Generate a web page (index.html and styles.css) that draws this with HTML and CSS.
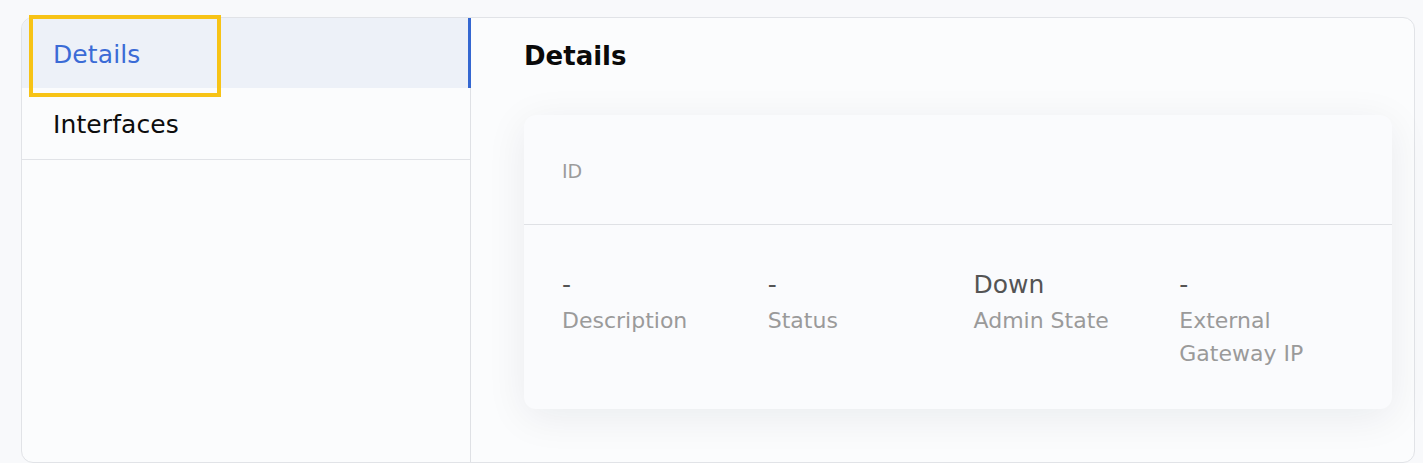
FILE: index.html
```html
<!DOCTYPE html>
<html lang="en">
<head>
<meta charset="utf-8">
<title>Router Details</title>
<link rel="stylesheet" href="styles.css">
</head>
<body>
<div class="page">
  <div class="panel">
    <nav class="sidebar">
      <div class="tab tab-active"><a class="tab-link focused" href="#details">Details</a></div>
      <div class="tab tab-last"><a class="tab-link" href="#interfaces">Interfaces</a></div>
    </nav>
    <main class="content">
      <h2 class="heading">Details</h2>
      <section class="card">
        <div class="card-top">
          <span class="id-label">ID</span>
        </div>
        <div class="card-grid">
          <div class="field">
            <div class="value">-</div>
            <div class="label">Description</div>
          </div>
          <div class="field">
            <div class="value">-</div>
            <div class="label">Status</div>
          </div>
          <div class="field">
            <div class="value">Down</div>
            <div class="label">Admin State</div>
          </div>
          <div class="field">
            <div class="value">-</div>
            <div class="label">External Gateway IP</div>
          </div>
        </div>
      </section>
    </main>
  </div>
</div>
</body>
</html>
```
FILE: styles.css
```css
*, *::before, *::after { box-sizing: border-box; }

html, body {
  margin: 0;
  padding: 0;
  background: #f8f9fb;
  font-family: "DejaVu Sans", "Noto Sans", sans-serif;
}

.page {
  padding: 17px 8px 0 21px;
  height: 100vh;
}

.panel {
  display: flex;
  height: 100%;
  border: 1px solid #e1e3e7;
  border-radius: 12px;
  background: #fbfcfd;
}

.sidebar {
  width: 449px;
  flex: 0 0 449px;
  border-right: 1px solid #dfe1e5;
  display: flex;
  flex-direction: column;
}

.tab {
  position: relative;
  height: 70px;
  display: flex;
  align-items: center;
  padding: 2px 0 0 31px;
}

.tab-active {
  background: #edf1f8;
  border-top-left-radius: 11px;
  border-right: 3px solid #3467d1;
  margin-right: -1px;
}

.tab-last {
  height: 72px;
  border-bottom: 1px solid #e1e3e7;
}

.tab-link {
  font-size: 25px;
  color: #0d0d0d;
  text-decoration: none;
  letter-spacing: 0.1px;
}

.tab-active .tab-link {
  color: #3b6bd6;
}

.focused::after {
  content: "";
  position: absolute;
  left: 7px;
  top: -3px;
  width: 192px;
  height: 82px;
  border: 4px solid #f7c316;
  pointer-events: none;
}

.content {
  flex: 1;
  padding: 23px 22px 0 53px;
}

.heading {
  margin: 0 0 44px 0;
  font-size: 26px;
  line-height: 30px;
  font-weight: bold;
  color: #0a0a0a;
}

.card {
  background: #fafbfd;
  border-radius: 12px;
  box-shadow: 0 8px 40px rgba(20, 30, 50, 0.075);
}

.card-top {
  height: 110px;
  display: flex;
  align-items: center;
  padding-left: 38px;
  border-bottom: 1px solid #dfe1e5;
}

.id-label {
  font-size: 19px;
  color: #9c9c9c;
  padding-top: 2px;
}

.card-grid {
  display: grid;
  grid-template-columns: repeat(4, 1fr);
  column-gap: 31px;
  padding: 41px 38px 39px 38px;
}

.value {
  font-size: 25px;
  line-height: 38px;
  color: #545454;
}

.label {
  font-size: 22px;
  line-height: 33px;
  color: #9a9a9a;
}
```
